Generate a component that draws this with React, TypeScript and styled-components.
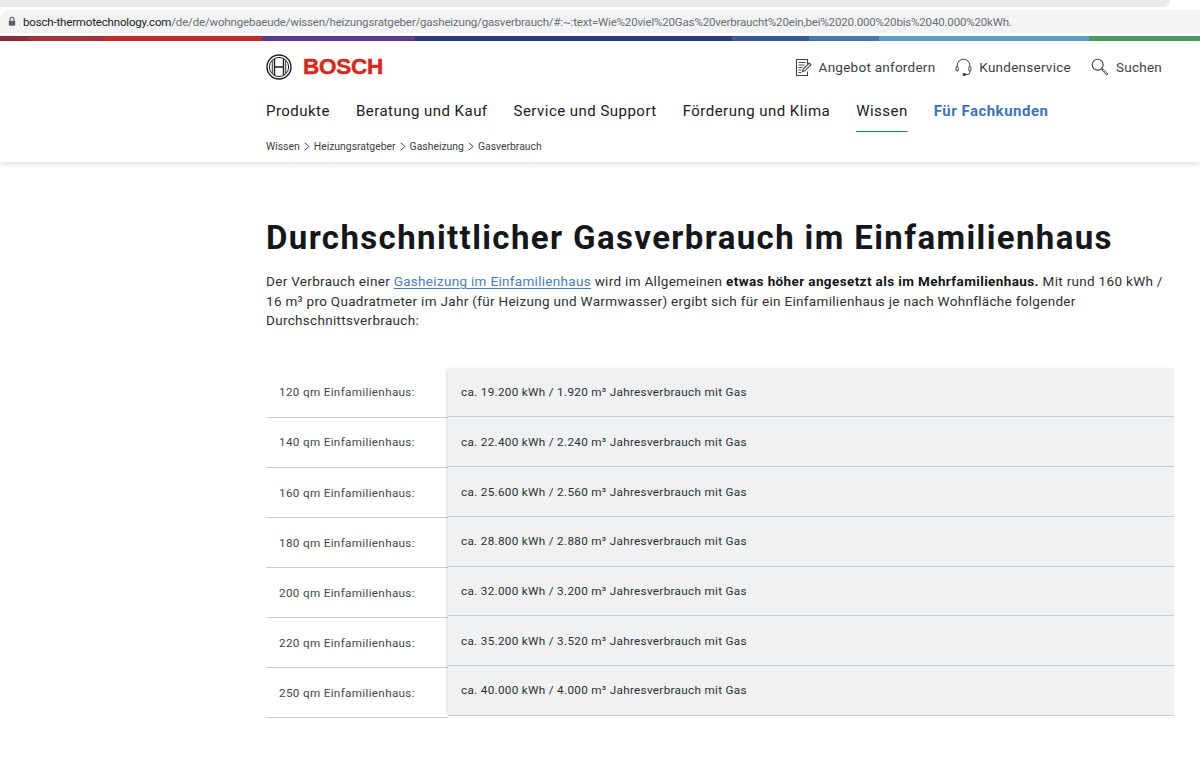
import React from 'react';
import styled, { createGlobalStyle } from 'styled-components';

const GlobalStyle = createGlobalStyle`
  html, body {
    margin: 0;
    padding: 0;
    background: #ffffff;
    font-family: "Roboto", "Liberation Sans", sans-serif;
    color: #1d2024;
  }
`;

const Page = styled.div`
  width: 1200px;
  height: 774px;
  overflow: hidden;
  display: flex;
  flex-direction: column;
`;

const TabStrip = styled.div`
  width: 1170px;
  height: 7px;
  flex: none;
  background: #e8eaed;
  border-bottom-right-radius: 8px;
`;

const UrlBar = styled.div`
  height: 23px;
  margin-top: 3px;
  flex: none;
  background: #f1f3f4;
  display: flex;
  align-items: center;
  gap: 6px;
  padding-left: 7px;
  font-family: "Roboto", "Liberation Sans", sans-serif;
  font-size: 11.5px;
  letter-spacing: -0.17px;
  color: #6b6f73;
  white-space: nowrap;
  border-top-left-radius: 10px;
`;

const UrlHost = styled.span`
  color: #202124;
`;

const ColorBar = styled.div`
  display: flex;
  height: 5px;
  margin-top: 3px;
  flex: none;
`;

const ColorPart = styled.div<{ $w: number; $c: string }>`
  width: ${p => p.$w}px;
  background: ${p => p.$c};
`;

const Header = styled.header`
  height: 121px;
  flex: none;
  padding-left: 266px;
  padding-right: 38px;
  background: #fff;
  box-shadow: 0 2px 6px rgba(0, 0, 0, 0.13);
  display: flex;
  flex-direction: column;
  position: relative;
`;

const TopRow = styled.div`
  display: flex;
  justify-content: space-between;
  align-items: center;
  height: 52px;
`;

const Logo = styled.div`
  display: flex;
  align-items: center;
  gap: 11px;
`;

const LogoWord = styled.span`
  font-family: "Liberation Sans", sans-serif;
  font-weight: 700;
  font-size: 22.5px;
  color: #d42a1c;
  letter-spacing: -0.25px;
  -webkit-text-stroke: 0.5px #d42a1c;
`;

const Actions = styled.div`
  display: flex;
  gap: 20px;
`;

const Action = styled.a`
  display: flex;
  align-items: center;
  gap: 7px;
  font-size: 13.5px;
  letter-spacing: 0.25px;
  color: #3c4045;
`;

const Nav = styled.nav`
  display: flex;
  gap: 26px;
  height: 40px;
  margin-top: 1px;
`;

const NavItem = styled.a<{ $active?: boolean; $accent?: boolean }>`
  height: 38px;
  box-sizing: border-box;
  padding-bottom: 3px;
  display: flex;
  align-items: center;
  font-size: 15px;
  letter-spacing: ${p => (p.$accent ? '0.5px' : '0.47px')};
  font-weight: ${p => (p.$accent ? 700 : 400)};
  color: ${p => (p.$accent ? '#3b74b8' : '#1d2024')};
  border-bottom: 1px solid ${p => (p.$active ? '#2f7bd0' : 'transparent')};
`;

const Crumbs = styled.div`
  display: flex;
  align-items: center;
  gap: 4px;
  margin-top: 2px;
  height: 20px;
  font-size: 10.4px;
  color: #3c4045;
`;

const Main = styled.main`
  padding-left: 266px;
  padding-right: 26px;
`;

const Title = styled.h1`
  margin: 54px 0 0;
  font-size: 33px;
  line-height: 44px;
  font-weight: 700;
  letter-spacing: 1.38px;
  color: #14171a;
  white-space: nowrap;
`;

const Intro = styled.p`
  margin: 12px 0 0;
  font-size: 13.5px;
  line-height: 19.6px;
  letter-spacing: 0.31px;
  color: #2c3034;
  white-space: nowrap;
`;

const InlineLink = styled.a`
  color: #4a7cbc;
  text-decoration: underline;
  text-underline-offset: 2px;
`;

const Strong = styled.strong`
  font-weight: 700;
  letter-spacing: 0.39px;
  color: #111417;
`;

const Table = styled.div`
  display: grid;
  grid-template-columns: 182px 1fr;
  margin-top: 37px;
`;

const LabelColumn = styled.div`
  display: flex;
  flex-direction: column;
`;

const LabelCell = styled.div`
  height: 50.1px;
  box-sizing: border-box;
  display: flex;
  align-items: center;
  padding-left: 13px;
  border-bottom: 1.5px solid #c9ccd1;
  font-size: 11.7px;
  letter-spacing: 0.33px;
  color: #44484d;
`;

const ValueColumn = styled.div`
  display: flex;
  flex-direction: column;
  align-self: start;
  background: #eff1f2;
  box-shadow: -3px 0 4px -2px rgba(0, 0, 0, 0.16);
`;

const ValueCell = styled.div`
  height: 49.7px;
  box-sizing: border-box;
  display: flex;
  align-items: center;
  padding-left: 13px;
  border-bottom: 1px solid #c9ccd1;
  font-size: 11.7px;
  letter-spacing: 0.32px;
  color: #2c3034;
`;

const rainbow: [number, string][] = [
  [28, '#8e2b3a'],
  [77, '#a53240'],
  [157, '#c22f2d'],
  [153, '#5d3a93'],
  [317, '#2e3a84'],
  [77, '#38599c'],
  [70, '#4a79b2'],
  [210, '#5aa2c8'],
  [111, '#4f9a62'],
];

const rows = [
  ['120', '19.200', '1.920'],
  ['140', '22.400', '2.240'],
  ['160', '25.600', '2.560'],
  ['180', '28.800', '2.880'],
  ['200', '32.000', '3.200'],
  ['220', '35.200', '3.520'],
  ['250', '40.000', '4.000'],
];

const LockIcon = () => (
  <svg width="10" height="11" viewBox="0 0 10 11" fill="none">
    <path d="M3 5V3.4a2 2 0 0 1 4 0V5" stroke="#5f6368" strokeWidth="1.1" />
    <rect x="1.8" y="4.8" width="6.4" height="5" rx="0.8" fill="#5f6368" />
  </svg>
);

const BoschMark = () => (
  <svg width="26" height="26" viewBox="0 0 26 26" fill="none" stroke="#1d2024">
    <circle cx="13" cy="13" r="12" strokeWidth="1.4" />
    <circle cx="13" cy="13" r="9.6" strokeWidth="1" />
    <path d="M8.5 4.6v16.8M17.5 4.6v16.8M8.5 13h9" strokeWidth="1.4" />
    <path d="M6.3 6.6v12.8M19.7 6.6v12.8" strokeWidth="0.9" />
  </svg>
);

const FormIcon = () => (
  <svg width="17" height="19" viewBox="0 0 17 19" fill="none" stroke="#3c4045" strokeWidth="1.1">
    <path d="M12.5 6V1.5H1.5v16h11v-4" />
    <path d="M3.5 4.5h7M3.5 7h6M3.5 9.5h4M3.5 12h3M3.5 14.5h3" strokeWidth="0.9" />
    <path d="M7.5 13.5l.7-2.4 6-6 1.7 1.7-6 6z" />
  </svg>
);

const HeadsetIcon = () => (
  <svg width="17" height="19" viewBox="0 0 17 19" fill="none" stroke="#3c4045" strokeWidth="1">
    <path d="M2.2 9V7.5a6.3 6.3 0 0 1 12.6 0V9" />
    <rect x="1" y="8.5" width="2.2" height="4.5" rx="1" />
    <rect x="13.8" y="8.5" width="2.2" height="4.5" rx="1" />
    <path d="M14.8 13v1.5a2 2 0 0 1-2 2H10" />
    <rect x="8" y="15.5" width="2.6" height="2" rx="0.8" fill="#3c4045" />
  </svg>
);

const SearchIcon = () => (
  <svg width="18" height="18" viewBox="0 0 18 18" fill="none" stroke="#3c4045">
    <circle cx="6.7" cy="6.7" r="5.4" strokeWidth="1.1" />
    <path d="M10.6 10.6l1.4 1.4" strokeWidth="1.1" />
    <path d="M12 11.2l4.8 4.8-1 1-4.8-4.8z" strokeWidth="1" />
  </svg>
);

const Chevron = () => (
  <svg width="6" height="9" viewBox="0 0 6 9" fill="none" stroke="#3c4045" strokeWidth="0.9">
    <path d="M.6 .8l4.6 3.7L.6 8.2" />
  </svg>
);

const App: React.FC = () => {
  return (
    <Page>
      <GlobalStyle />
      <TabStrip />
      <UrlBar>
        <LockIcon />
        <span>
          <UrlHost>bosch-thermotechnology.com</UrlHost>
          /de/de/wohngebaeude/wissen/heizungsratgeber/gasheizung/gasverbrauch/#:~:text=Wie%20viel%20Gas%20verbraucht%20ein,bei%2020.000%20bis%2040.000%20kWh.
        </span>
      </UrlBar>
      <ColorBar>
        {rainbow.map(([w, c]) => (
          <ColorPart key={c} $w={w} $c={c} />
        ))}
      </ColorBar>
      <Header>
        <TopRow>
          <Logo>
            <BoschMark />
            <LogoWord>BOSCH</LogoWord>
          </Logo>
          <Actions>
            <Action><FormIcon />Angebot anfordern</Action>
            <Action><HeadsetIcon />Kundenservice</Action>
            <Action><SearchIcon />Suchen</Action>
          </Actions>
        </TopRow>
        <Nav>
          <NavItem>Produkte</NavItem>
          <NavItem>Beratung und Kauf</NavItem>
          <NavItem>Service und Support</NavItem>
          <NavItem>Förderung und Klima</NavItem>
          <NavItem $active>Wissen</NavItem>
          <NavItem $accent>Für Fachkunden</NavItem>
        </Nav>
        <Crumbs>
          Wissen <Chevron /> Heizungsratgeber <Chevron /> Gasheizung <Chevron /> Gasverbrauch
        </Crumbs>
      </Header>
      <Main>
        <Title>Durchschnittlicher Gasverbrauch im Einfamilienhaus</Title>
        <Intro>
          Der Verbrauch einer <InlineLink>Gasheizung im Einfamilienhaus</InlineLink> wird im Allgemeinen{' '}
          <Strong>etwas höher angesetzt als im Mehrfamilienhaus.</Strong> Mit rund 160 kWh /<br />
          16 m³ pro Quadratmeter im Jahr (für Heizung und Warmwasser) ergibt sich für ein Einfamilienhaus je nach Wohnfläche folgender<br />
          Durchschnittsverbrauch:
        </Intro>
        <Table>
          <LabelColumn>
            {rows.map(r => (
              <LabelCell key={r[0]}>{r[0]} qm Einfamilienhaus:</LabelCell>
            ))}
          </LabelColumn>
          <ValueColumn>
            {rows.map(r => (
              <ValueCell key={r[0]}>
                ca. {r[1]} kWh / {r[2]} m³ Jahresverbrauch mit Gas
              </ValueCell>
            ))}
          </ValueColumn>
        </Table>
      </Main>
    </Page>
  );
};

export default App;
